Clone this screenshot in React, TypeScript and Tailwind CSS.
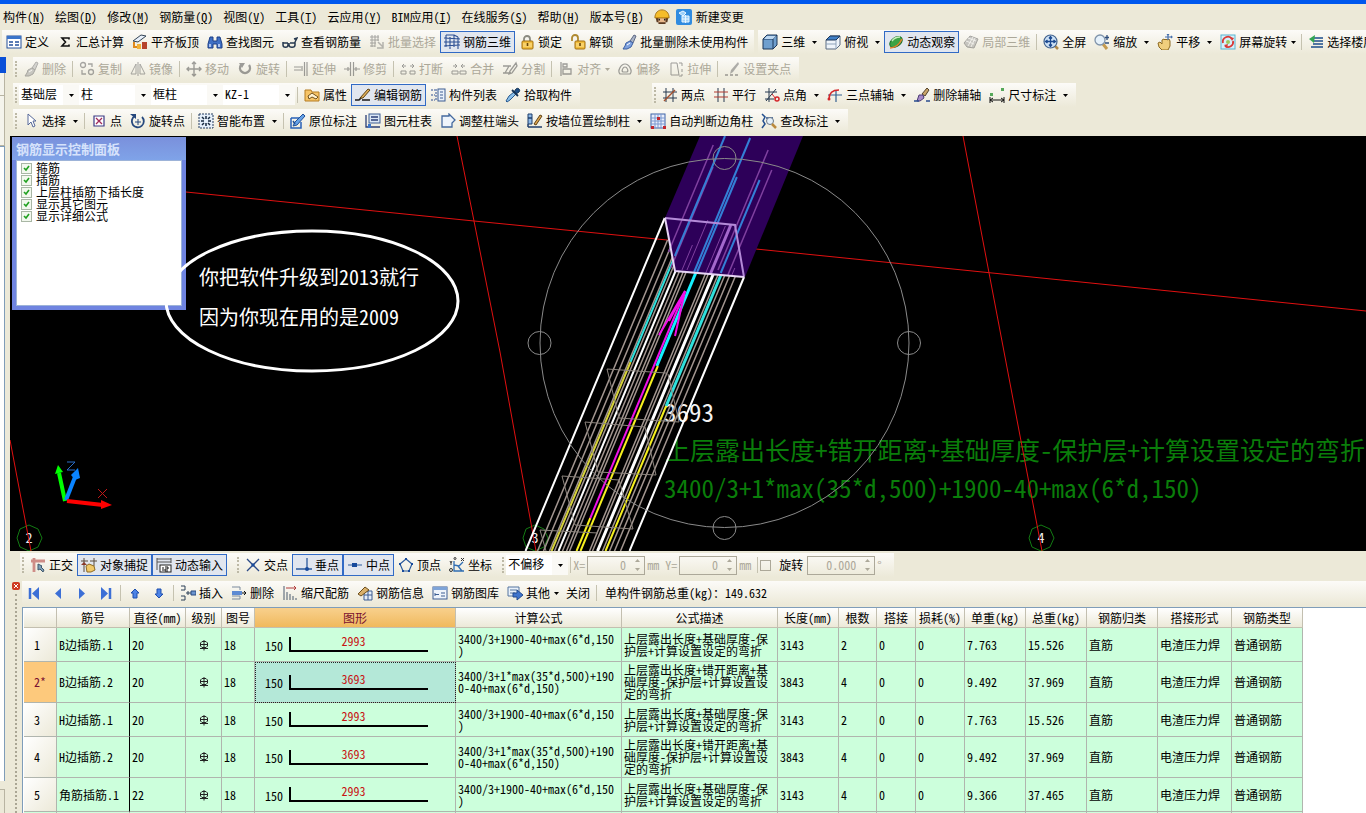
import React from 'react';

const ink = '#2d4f93';

// 16x16 toolbar drawings
const ICONS: Record<string, React.ReactNode> = {
  define: <><rect x="1" y="2" width="14" height="12" fill="#fff" stroke="#24509c" /><path d="M1 2h14v3H1z" fill="#3b74c9" /><path d="M3 8h4M3 11h4M9 8h4M9 11h4" stroke="#24509c" strokeWidth="1.5" /></>,
  sigma: <path d="M12 5.500V4H5l3.500 4L5 12h7v-1.500" fill="none" stroke="#111" strokeWidth="1.600" />,
  slab: <><path d="M1 7 9 1l5 1-8 6z" fill="#e8f0fa" stroke="#345" /><path d="M2 8v5h3" fill="none" stroke="#e08a1e" strokeWidth="2" /><path d="M5 10h4v5H5z" fill="#f2b33a" /><path d="M10 8h5v7h-5z" fill="#b5432b" /></>,
  find: <><path d="M3 3h3v4h4V3h3l2 7v4h-5v-4H6v4H1v-4z" fill="#3f6fc4" stroke="#1c3f86" /><path d="M3 10v3M12 10v3" stroke="#cfe0ff" strokeWidth="1.5" /></>,
  glasses: <><path d="M1 8v3c0 3 5 3 5 0V9M7 11c0 3 6 3 6 0V8M6 10h2M13 8l2-4-3 1M1 9h5M8 9h5" fill="none" stroke="#26384f" strokeWidth="1.500" /></>,
  batch: <><path d="M1 3h9M1 6h9M1 9h6M3 1v12M6 1v12M9 1v6M1 12h5" stroke="#555" /><path d="M9 8l5 5M14 8v6H8" stroke="#777" strokeWidth="1.5" fill="none" /></>,
  cage: <><path d="M2 1v12M6 3v12M10 1v12M14 3v12M0 4l16 1M0 8h16M0 12l16-1M2 1h8l4 2" fill="none" stroke={ink} strokeWidth="1.1" /></>,
  lock: <><path d="M5 8V5a3 3 0 0 1 6 0v3" fill="none" stroke="#8a8a80" strokeWidth="1.8" /><rect x="3" y="7" width="11" height="8" rx="1" fill="#f1bd3c" stroke="#a36f10" /><path d="M4 10h9M4 12h9" stroke="#ffe59a" /><path d="M8.500 9v3" stroke="#6a4606" strokeWidth="1.6" /></>,
  unlock: <><path d="M2 7V4a3 3 0 0 1 6 0v3" fill="none" stroke="#b08a30" strokeWidth="1.8" /><rect x="5" y="7" width="10" height="8" rx="1" fill="#f1bd3c" stroke="#a36f10" /><path d="M6 10h8M6 12h8" stroke="#ffe59a" /><path d="M10 9v3" stroke="#6a4606" strokeWidth="1.6" /></>,
  brush: <><path d="M9 7l4-6 2 1-3 7z" fill="#a9b3c6" stroke="#5c6885" /><path d="M5 9l4-2 3 2-2 4-4 2-4 0 2-3z" fill="#7fa2de" stroke="#3b5fa3" /><path d="M6 11l3-2" stroke="#fff" /></>,
  cube: <><path d="M1 5l4-4h10v10l-4 4H1z" fill="#6f9fce" stroke="#1d3658" /><path d="M1 5h10v10M11 5l4-4" fill="none" stroke="#1d3658" /><path d="M2 5l3-3h9l-3 3z" fill="#bcd7f1" /></>,
  cubeTop: <><path d="M1 6l4-4h10v9l-4 4H1z" fill="#eef4fa" stroke="#5a6b80" /><path d="M1 6l4-4h10l-4 4z" fill="#3f7fc6" stroke="#1d3658" /><path d="M11 6v9M1 10h10" stroke="#8fa3ba" /></>,
  orbit: <><ellipse cx="8" cy="8" rx="7" ry="4.500" transform="rotate(-35 8 8)" fill="#3da344" stroke="#1c6e2a" /><path d="M4 7c2-3 5-4 8-4" stroke="#c8f0bd" fill="none" strokeWidth="1.500" /><path d="M2 14c4 0 9-3 12-9" stroke="#e57f2c" fill="none" strokeWidth="1.500" /></>,
  local3d: <><path d="M1 9l6-7 8 3-4 9-7-1z" fill="#999" stroke="#555" /><path d="M3 7l8 3M5 4l8 3M5 12l5-9M8 13l4-9" stroke="#eee" /></>,
  full: <><path d="M11 11l4 4" stroke="#b28a4a" strokeWidth="2.500" /><circle cx="7.500" cy="7.500" r="6.500" fill="#cfe3f7" stroke="#44648f" strokeWidth="1.200" /><path d="M7.500 3v9M3 7.500h9M6 4.500l1.500-2L9 4.500M6 10.500l1.500 2 1.500-2M4.500 6l-2 1.500 2 1.500M10.500 6l2 1.500-2 1.500" fill="none" stroke="#1c4a91" strokeWidth="1.300" /></>,
  zoom: <><path d="M9 10l4 5" stroke="#c59b4f" strokeWidth="3" /><circle cx="6" cy="6" r="5" fill="#e5f1fb" stroke="#7f93aa" strokeWidth="1.300" /><path d="M13 1v5M11 3.500h4M11 9h4" stroke="#2e4d7c" strokeWidth="1.300" /></>,
  pan: <><path d="M1 9l2-1 2 2V6l2-1 1 1 1-1 1 1 2-1 1 2v5l-2 4H5l-3-3z" fill="#f0ce7d" stroke="#8d6a22" /><path d="M11 0v6M8 3h7M10 1l1-1 1 1M14 2l1 1-1 1" fill="none" stroke="#4770ad" strokeWidth="1.200" /></>,
  screenRot: <><rect x="1" y="1" width="14" height="14" fill="#d6f0fa" stroke="#58b4cf" /><path d="M3 9a5 5 0 0 1 9-4M13 7a5 5 0 0 1-8 5" fill="none" stroke="#d93a36" strokeWidth="1.800" /><path d="M10 3l4 1-2 3zM7 14l-3-3 4-1z" fill="#d93a36" /><circle cx="8" cy="8" r="2" fill="#9cc95d" /></>,
  floors: <><path d="M5 4h10M5 7h10M5 10h10M3 13h12" stroke="#1c4d8c" strokeWidth="1.600" /><path d="M7 1L1 5l5 4z" fill="#31a552" /></>,
  copy: <><circle cx="4" cy="4" r="2.500" fill="none" stroke="#555" strokeWidth="1.300" /><circle cx="12" cy="11" r="2.500" fill="none" stroke="#555" strokeWidth="1.300" /><path d="M9 3h4v3M3 9v4h4" fill="none" stroke="#555" strokeWidth="1.300" /></>,
  mirror: <path d="M6 3v10H1zM10 3v10h5zM8 1v14" fill="none" stroke="#555" />,
  move: <path d="M8 1v14M1 8h14M6 3l2-2 2 2M6 13l2 2 2-2M3 6L1 8l2 2M13 6l2 2-2 2" fill="none" stroke="#444" strokeWidth="1.400" />,
  rotate: <><path d="M4 4a5 5 0 1 0 8 0" fill="none" stroke="#444" strokeWidth="2.400" /><path d="M2 2h6L5 7z" fill="#444" /></>,
  extend: <path d="M1 6h7M1 9h7M11.500 1v14M14 1v14M9 5v5" stroke="#444" fill="none" strokeWidth="1.200" />,
  trim: <path d="M0 8h6M10 8h6M6.500 1v14M9.500 1v14M4 6v4M12 6v4" stroke="#444" fill="none" strokeWidth="1.200" />,
  breakIt: <path d="M1 10h5v3H1zM10 10h5v3h-5zM2 5h4M10 5h4M4 3L2 5l2 2M12 3l2 2-2 2" stroke="#444" fill="none" />,
  join: <path d="M1 10h6v3H1zM9 10h6v3H9zM2 5h4M10 5h4M4 3l2 2-2 2M12 3l-2 2 2 2" stroke="#444" fill="none" />,
  split: <path d="M1 5h8M1 12h8M3 12l4-7M14 2L8 10l-1 3 3-1 5-7z" stroke="#444" fill="none" strokeWidth="1.300" />,
  align: <path d="M3 1v14M5 3h4v3H5zM5 8h8v5H5z" stroke="#444" fill="none" strokeWidth="1.300" />,
  offset: <path d="M8 3c4 0 8 7 5 10H3C0 10 4 3 8 3zM8 6c2 0 4 4 2 5H6C4 10 6 6 8 6z" stroke="#444" fill="none" strokeWidth="1.200" />,
  stretch: <path d="M3 2h6l2 12H3zM11 2h3v3M14 8v3M14 13v2h-3" stroke="#444" fill="none" />,
  grip: <><path d="M14 1L7 9l-1 4 3-2 6-8z" fill="#666" /><path d="M1 14h3M6 14h3M11 14h3" stroke="#444" strokeWidth="1.500" /></>,
  props: <><path d="M1 3h6l1 2h7v9H1z" fill="#f6c467" stroke="#b57d22" /><path d="M4 9l4-3 6 4-2 2-4-2-3 2z" fill="#fff2d0" stroke="#70501a" /></>,
  editRebar: <><path d="M0 13h4l3-3M7 13h8" fill="none" stroke="#1a1a1a" strokeWidth="1.600" /><path d="M5 11l8-9 2 1-7 8z" fill="#e2b15a" stroke="#5d4317" /></>,
  list: <><path d="M1 3h4M1 8h4M1 13h4M6 2v12" stroke={ink} strokeDasharray="2 1" /><rect x="8" y="2" width="7" height="12" fill="#eaf2fb" stroke="#3c5d92" /><path d="M10 5h3M10 8h3M10 11h3" stroke="#3c5d92" /></>,
  pick: <><path d="M4 9l5-4 2 2-6 6-3 2-1-1z" fill="#8bc0ea" stroke="#28598f" /><path d="M9 5l2-3c2-2 5 1 3 3l-3 2z" fill="#1f4f86" stroke="#143355" /><path d="M7 3l6 6" stroke="#143355" strokeWidth="1.800" /></>,
  twoPt: <><path d="M4 1v14M11 1v14M1 5h14M1 11h14" stroke="#26384f" /><path d="M2 14L13 3" stroke="#a3502f" strokeWidth="1.400" /></>,
  parallel: <><path d="M5 1v14M11 1v14" stroke="#26384f" /><path d="M1 5h14M1 10h14" stroke="#b23a30" strokeWidth="1.200" /></>,
  ptAngle: <><path d="M5 1v14M1 5h12M1 12h9" stroke="#26384f" /><path d="M2 14L12 2" stroke="#26384f" /><path d="M8 7l4 5" stroke="#d4262a" /><circle cx="13" cy="12" r="2" fill="none" stroke="#d4262a" strokeWidth="1.500" /></>,
  threePt: <><path d="M1 8h14M9 3v12" stroke="#34608f" strokeWidth="1.200" /><path d="M2 12c0-6 4-9 10-9" fill="none" stroke="#d4262a" strokeWidth="1.500" /><circle cx="2" cy="12" r="1.500" fill="#d4262a" /></>,
  brushAxis: <><path d="M8 7l5-6 2 2-4 6z" fill="#c9a56a" stroke="#52412a" /><path d="M5 8l4 0 1 3-4 3-3 0z" fill="#a68bc8" stroke="#4f3d78" /><path d="M0 14h5M12 14h4" stroke="#2a4c8f" strokeWidth="1.500" /></>,
  dim: <><path d="M1 10v6M15 10v6M1 13h14M4 11l-3 2 3 2M12 11l3 2-3 2" fill="none" stroke="#111" /><path d="M1 6h3v3H1zM12 1h3v3h-3z" fill="#55a85a" /></>,
  cursor: <path d="M5 1v11l3-3 2 5 2-1-2-5h3z" fill="#fff" stroke="#56699a" />,
  point: <><path d="M3 3h10v10H3z" fill="#fff" stroke="#3d3a86" strokeWidth="1.200" /><path d="M5 5l6 6M11 5l-6 6" stroke="#a02a5a" strokeWidth="1.300" /></>,
  rotPt: <><path d="M5 3a6 6 0 1 0 7 1" fill="none" stroke="#26487d" strokeWidth="1.800" /><path d="M0 1h6v5z" fill="#26487d" /><path d="M8 6v6M5 9h6" stroke="#26487d" /></>,
  smart: <><rect x="1" y="1" width="14" height="14" fill="#e5effa" stroke="#223a5e" strokeDasharray="2 1" /><path d="M8 3v3M8 10v3M3 8h3M10 8h3M4 4l2 2M12 4l-2 2M4 12l2-2M12 12l-2-2" stroke="#16283f" strokeWidth="1.500" /></>,
  origin: <><path d="M1 5h8M1 5v10h10V9" fill="none" stroke="#2a62b8" strokeWidth="1.500" /><path d="M3 13l2-4 8-8 2 2-8 9z" fill="#67a2e6" stroke="#1f4f98" /><path d="M3 8l2 3" stroke="#1f4f98" strokeWidth="1.500" /></>,
  colTable: <><rect x="4" y="1" width="11" height="9" fill="#dbe7f5" stroke="#3c5d92" /><path d="M6 4h7M6 7h7M1 2v12h14" fill="none" stroke="#2b3f77" strokeWidth="1.300" /><path d="M3 11h3v4H3z" fill="#3b74c9" /></>,
  colEnd: <path d="M2 3h7V1l6 6-3 3v4H2z" fill="#eef4fb" stroke="#44699f" strokeWidth="1.300" />,
  byWall: <><path d="M1 1h4v4H1zM1 5h4v6H1z" fill="#8fb9e6" stroke="#1f3e6c" /><path d="M1 14h14M1 11v3" stroke="#1f3e6c" strokeWidth="1.500" /><path d="M7 11l6-9 2 1-6 9z" fill="#e0a44d" stroke="#5d4317" /></>,
  autoCol: <><rect x="1" y="1" width="14" height="14" fill="#e8eefb" stroke="#3d63a8" /><path d="M5 1v14M8 1v14M11 1v14M1 5h14M1 8h14M1 11h14" stroke="#7b98cf" /><path d="M1 13h3v3H1zM13 13h3v3h-3zM7 4h3v3H7z" fill="#c2272d" /></>,
  checkDim: <><path d="M1 1l3 3-2 4 2 3-3 4M5 5h7" fill="none" stroke="#24508f" strokeWidth="1.500" /><circle cx="9" cy="8" r="3.500" fill="#e4f0fa" stroke="#6a7685" /><path d="M11 11l4 4" stroke="#bb8a3c" strokeWidth="2.500" /></>,
  ortho: <><path d="M1 4h14M4 1v14" stroke="#cf8d87" strokeWidth="2.800" /><path d="M8 7v6l2-1 3 3 1-2-3-3 1-1z" fill="#7fa0b8" stroke="#3f566b" /></>,
  osnap: <><path d="M3 1v14M13 1v8M0 4h7M9 4h7" stroke="#5a4a3a" /><path d="M5 9l3-2 5 2 1 4-4 2H6z" fill="#f0c869" stroke="#8d6a22" /><path d="M0 8l3-3 3 3z" fill="#8a3a2a" /></>,
  dynIn: <><path d="M1 2h14M1 5h14M1 1v12M15 1v5" stroke="#555" /><rect x="4" y="8" width="11" height="7" fill="#fff" stroke="#222" /><path d="M7 10v4M9 10h3v2H9v2h3" fill="none" stroke="#111" /></>,
  cross: <><path d="M2 2l12 12M14 2L2 14" stroke="#2b4a86" strokeWidth="1.300" /><path d="M6.500 6.500h3v3h-3z" fill="#174a9c" /></>,
  perp: <><path d="M0 12h16M11 1v11" stroke="#2b5a9c" strokeWidth="1.300" /><circle cx="11" cy="12" r="2" fill="#174a9c" /></>,
  mid: <><path d="M1 8h14" stroke="#2b5a9c" /><path d="M5 6h5v4H5z" fill="#174a9c" /></>,
  vertex: <><path d="M8 2l6 5-3 7H5L2 7z" fill="none" stroke="#2b5a9c" strokeWidth="1.200" /><path d="M7 1h2v2H7zM13 6h2v2h-2zM1 6h2v2H1zM4 13h2v2H4zM10 13h2v2h-2z" fill="#174a9c" /></>,
  coord: <><path d="M5 4v10h10M5 8l5 1 4-4M9 9l4 5" fill="none" stroke="#2f6db2" strokeWidth="1.300" /><path d="M1 4l1 2 1-2M2 6v2M12 1l3 3M15 1l-3 3" stroke="#333" fill="none" /><circle cx="2" cy="13" r="1.500" fill="none" stroke="#333" /><circle cx="6" cy="1.500" r="1" fill="none" stroke="#333" /></>,
  first: <><path d="M4 3v11" stroke="#3c6fd6" strokeWidth="2.500" /><path d="M13 2v13L6 8.500z" fill="#3c6fd6" /></>,
  prev: <path d="M11 3v11L5 8.500z" fill="#3c6fd6" />,
  next: <path d="M5 3v11l6-5.500z" fill="#3c6fd6" />,
  last: <><path d="M12 3v11" stroke="#3c6fd6" strokeWidth="2.500" /><path d="M3 2v13l7-6.500z" fill="#3c6fd6" /></>,
  up: <path d="M8 4l4 4h-2v5H6V8H4z" fill="#4d83e6" stroke="#1f4fae" />,
  down: <path d="M8 13l4-4h-2V4H6v5H4z" fill="#4d83e6" stroke="#1f4fae" />,
  insert: <><path d="M1 1h4v4H1M1 11h4v4H1M6 8h5M8 6v4" fill="none" stroke="#2b3f57" /><path d="M11 6h5v4h-5z" fill="#6b94cf" stroke="#2a4a80" /></>,
  del: <><path d="M1 2h8v3M1 11h8v3H1" fill="none" stroke="#7a8a9e" /><path d="M1 6h10v4H1z" fill="#5e8bd3" /><path d="M11 8h4M13 6l2 2-2 2" fill="none" stroke="#111" /></>,
  scale: <><path d="M2 1v14M5 7v8M8 9v6M11 11v4M14 13v2" stroke="#4a5a6e" /><path d="M4 3h10M12 1l2 2-2 2" fill="none" stroke="#b03a3a" /></>,
  info: <><path d="M7 6h8v9H7zM7 10h8M11 6v9" fill="#e5eef8" stroke="#3c5d92" /><path d="M1 9l7-7 4 3-8 6z" fill="#d9b06a" stroke="#6b4d1c" /></>,
  lib: <><rect x="1" y="2" width="14" height="12" fill="#eef4fb" stroke="#3c5d92" /><path d="M1 2h14v3H1z" fill="#7fa4d8" /><path d="M3 8v3M3 9.500h4M9 8h4M9 11h4" stroke="#3c5d92" /></>,
  other: <><path d="M1 2h11v9H1zM3 5h7M3 8h5" fill="#e9f1fa" stroke="#55749f" /><path d="M6 8h4V5l6 5-6 5v-3H6z" fill="#3f74cc" stroke="#21498f" /></>,
};

interface Item {
  icon?: string;
  text?: string;
  label?: string;
  arrow?: 'wide' | 'tight';
  on?: boolean;
  off?: boolean;
  sep?: boolean;
}

const SEP: Item = { sep: true };

const rowMain: Item[] = [
  { icon: 'define', text: '定义' }, { icon: 'sigma', text: '汇总计算' }, { icon: 'slab', text: '平齐板顶' },
  { icon: 'find', text: '查找图元' }, { icon: 'glasses', text: '查看钢筋量' }, { icon: 'batch', text: '批量选择', off: true },
  { icon: 'cage', text: '钢筋三维', on: true }, { icon: 'lock', text: '锁定' }, { icon: 'unlock', text: '解锁' },
  { icon: 'brush', text: '批量删除未使用构件' },
];
const rowView: Item[] = [
  { icon: 'cube', text: '三维', arrow: 'wide' }, { icon: 'cubeTop', text: '俯视', arrow: 'wide' },
  { icon: 'orbit', text: '动态观察', on: true }, { icon: 'local3d', text: '局部三维', off: true }, SEP,
  { icon: 'full', text: '全屏' }, { icon: 'zoom', text: '缩放', arrow: 'wide' }, { icon: 'pan', text: '平移', arrow: 'wide' },
  { icon: 'screenRot', text: '屏幕旋转', arrow: 'tight' }, SEP, { icon: 'floors', text: '选择楼层' },
];
const rowEdit: Item[] = [
  { icon: 'brush', text: '删除' }, SEP, { icon: 'copy', text: '复制' }, { icon: 'mirror', text: '镜像' }, SEP,
  { icon: 'move', text: '移动' }, { icon: 'rotate', text: '旋转' }, SEP, { icon: 'extend', text: '延伸' },
  { icon: 'trim', text: '修剪' }, SEP, { icon: 'breakIt', text: '打断' }, { icon: 'join', text: '合并' },
  { icon: 'split', text: '分割' }, SEP, { icon: 'align', text: '对齐', arrow: 'tight' }, { icon: 'offset', text: '偏移' },
  { icon: 'stretch', text: '拉伸' }, SEP, { icon: 'grip', text: '设置夹点' },
].map((i) => ({ ...i, off: true }));
const rowComp: Item[] = [
  { icon: 'props', text: '属性' }, { icon: 'editRebar', text: '编辑钢筋', on: true },
  { icon: 'list', text: '构件列表' }, { icon: 'pick', text: '拾取构件' },
];
const rowAxis: Item[] = [
  { icon: 'twoPt', text: '两点' }, { icon: 'parallel', text: '平行' }, { icon: 'ptAngle', text: '点角', arrow: 'wide' },
  { icon: 'threePt', text: '三点辅轴', arrow: 'wide' }, { icon: 'brushAxis', text: '删除辅轴' },
  { icon: 'dim', text: '尺寸标注', arrow: 'wide' },
];
const rowDraw: Item[] = [
  { icon: 'cursor', text: '选择', arrow: 'wide' }, SEP, { icon: 'point', text: '点' }, { icon: 'rotPt', text: '旋转点' }, SEP,
  { icon: 'smart', text: '智能布置', arrow: 'wide' }, SEP, { icon: 'origin', text: '原位标注' },
  { icon: 'colTable', text: '图元柱表' }, { icon: 'colEnd', text: '调整柱端头' },
  { icon: 'byWall', text: '按墙位置绘制柱', arrow: 'wide' }, { icon: 'autoCol', text: '自动判断边角柱' },
  { icon: 'checkDim', text: '查改标注', arrow: 'wide' },
];
const rowMode: Item[] = [
  { icon: 'ortho', text: '正交' }, { icon: 'osnap', text: '对象捕捉', on: true }, { icon: 'dynIn', text: '动态输入', on: true },
];
const rowSnap: Item[] = [
  { icon: 'cross', text: '交点' }, { icon: 'perp', text: '垂点', on: true }, { icon: 'mid', text: '中点', on: true },
  { icon: 'vertex', text: '顶点' }, { icon: 'coord', text: '坐标' },
];
const rowRebar: Item[] = [
  { icon: 'first', label: '首行' }, { icon: 'prev', label: '上一行' }, { icon: 'next', label: '下一行' }, { icon: 'last', label: '末行' }, SEP,
  { icon: 'up', label: '上移' }, { icon: 'down', label: '下移' }, SEP,
  { icon: 'insert', text: '插入' }, { icon: 'del', text: '删除' }, { icon: 'scale', text: '缩尺配筋' },
  { icon: 'info', text: '钢筋信息' }, { icon: 'lib', text: '钢筋图库' }, { icon: 'other', text: '其他', arrow: 'tight' },
  { text: '关闭' }, SEP,
];

const MENU: [string, string][] = [
  ['构件', 'N'], ['绘图', 'D'], ['修改', 'M'], ['钢筋量', 'Q'], ['视图', 'V'], ['工具', 'T'], ['云应用', 'Y'],
  ['BIM应用', 'I'], ['在线服务', 'S'], ['帮助', 'H'], ['版本号', 'B'],
];

const Icon = ({ name }: { name: string }) => (
  <svg viewBox="0 0 16 16" className="w-4 h-4 shrink-0">{ICONS[name]}</svg>
);

const Arrow = () => (
  <svg viewBox="0 0 5 3" className="w-[5px] h-[3px] shrink-0"><path d="M0 0h5L2.500 3z" fill="currentColor" /></svg>
);

const Items = ({ items }: { items: Item[] }) => (
  <>
    {items.map((it, i) =>
      it.sep ? (
        <span key={i} className="w-px h-4 mx-0.5 shrink-0 bg-[#c5c2b0]"></span>
      ) : (
        <button
          key={i}
          disabled={it.off}
          aria-label={it.label}
          className={`h-[22px] shrink-0 flex items-center border whitespace-nowrap ${
            it.on ? 'bg-[#e1e6ef] border-[#316ac5]' : 'border-transparent'
          } ${it.off ? 'text-[#aca899]' : ''}`}
        >
          <span className={`flex items-center gap-[3px] px-[3px] ${it.off ? '[&>svg]:opacity-50 [&>svg]:grayscale' : ''}`}>
            {it.icon && <Icon name={it.icon} />}
            {it.text}
          </span>
          {it.arrow && (
            <span className={it.arrow === 'wide' ? 'w-3 pl-1' : 'w-2 pl-px'}><Arrow /></span>
          )}
        </button>
      )
    )}
  </>
);

const Grip = () => (
  <span className="w-0.5 h-4 mx-0.5 shrink-0 border-l-2 border-dotted border-[#bdb9a6]"></span>
);

const Bar = ({ className = '', children }: { className?: string; children: React.ReactNode }) => (
  <div className={`h-6 flex items-center bg-linear-to-b from-[#fcfbf8] to-[#ece9d8] ${className}`}>{children}</div>
);

const Combo = ({ label, value, width }: { label: string; value: string; width: string }) => (
  <span className={`relative shrink-0 ${width}`}>
    <select aria-label={label} className="w-full h-5 pl-0.5 pb-[3px] appearance-none bg-white leading-4 outline-none">
      <option>{value}</option>
    </select>
    <span className="absolute right-0 top-0 w-4 h-5 flex items-center justify-center pointer-events-none bg-[#faf9f5]"><Arrow /></span>
  </span>
);

const Spin = ({ id, value, width }: { id: string; value: string; width: string }) => (
  <span className={`relative shrink-0 h-[19px] flex border border-[#aca899] ${width}`}>
    <input id={id} disabled defaultValue={value} className="w-full min-w-0 pr-[18px] text-right text-[#aca899] bg-transparent" />
    <span className="absolute right-1 top-0 h-full flex flex-col justify-around text-[#aca899] pointer-events-none">
      <span className="rotate-180 flex"><Arrow /></span>
      <Arrow />
    </span>
  </span>
);

const PANEL = ['箍筋', '插筋', '上层柱插筋下插长度', '显示其它图元', '显示详细公式'];

const DisplayPanel = () => (
  <div className="absolute left-0.5 top-px w-[174px] h-[173px] flex flex-col px-1 pb-1 bg-[#6f84e0]">
    <div className="-mx-1 px-1 h-[23px] pt-1 bg-linear-to-b from-[#7a90dc] to-[#7fa3e8] text-[13px] leading-4 font-bold text-[#d6e2fb]">钢筋显示控制面板</div>
    <div className="flex-1 bg-white border border-[#9db3d8] pl-1 pt-px">
      {PANEL.map((p) => (
        <label key={p} className="relative flex items-center gap-1 h-3 leading-3">
          <input type="checkbox" defaultChecked className="appearance-none w-[11px] h-[11px] bg-[#f2f8ee] border border-[#a9b7a5]" />
          <svg viewBox="0 0 7 7" className="absolute left-0.5 top-[3px] w-[7px] h-[7px] pointer-events-none"><path d="M1 3l2 2 3-4" fill="none" stroke="#21a121" strokeWidth="1.600" /></svg>
          {p}
        </label>
      ))}
    </div>
  </div>
);

// every bar of the column runs along this slope; x is given at y = 380
const SLOPE = 0.418;
const along = (x: number, y: number) => x + (380 - y) * SLOPE;

interface Rod { x: number; from: number; to: number; color: string; w?: number }

const rod = (x: number, from: number, to: number, color: string, w = 1): Rod => ({ x, from, to, color, w });

const GREY = '#a39690';
const CYAN = '#2fe0dc';
const YELLOW = '#f6f01e';
const MAUVE = '#8040a0';
const BLUE = '#347fd6';

const RODS: Rod[] = [
  ...[609, 615, 621].map((x) => rod(x, 240, 551, GREY, 1.5)),
  ...[626, 634, 638, 641].map((x) => rod(x, 262, 551, GREY, 1.5)),
  ...[661, 664, 669, 674].map((x) => rod(x, 268, 551, GREY, 1.5)),
  ...[681, 686, 692].map((x) => rod(x, 274, 551, GREY, 1.5)),
  rod(623, 258, 362, CYAN, 2), rod(623, 362, 551, '#d6d23a', 2),
  rod(651, 272, 366, '#14f0ff', 3), rod(652, 366, 551, YELLOW, 2), rod(648, 518, 551, YELLOW, 2),
  rod(677, 272, 406, CYAN, 3), rod(677, 406, 551, YELLOW, 2),
  rod(630, 271, 551, '#fff', 2), rod(669, 274, 551, '#fff', 3),
  rod(648, 291, 518, '#f010e8', 2),
];

const EDGES: Rod[] = [rod(597, 218, 551, '#fff', 2), rod(701, 277, 551, '#fff', 2)];

const UPPER: Rod[] = [
  rod(615, 145, 252, MAUVE, 1.5), rod(624, 167, 268, MAUVE, 1.5), rod(672, 150, 270, MAUVE, 1.5),
  rod(684, 170, 275, MAUVE, 1.5), rod(641, 220, 270, MAUVE), rod(636, 245, 270, MAUVE), rod(666, 225, 274, '#a468cc', 3),
  rod(661, 226, 274, MAUVE), rod(688, 268, 276, MAUVE),
  rod(623, 136, 256, BLUE, 2), rod(649, 138, 272, BLUE, 2), rod(652, 177, 272, BLUE, 2), rod(676, 180, 273, BLUE, 2),
];

const Rods = ({ rods }: { rods: Rod[] }) => (
  <>
    {rods.map((r, i) => (
      <line key={i} x1={along(r.x, r.from)} y1={r.from} x2={along(r.x, r.to)} y2={r.to} stroke={r.color} strokeWidth={r.w} />
    ))}
  </>
);

const Bubble = ({ x, n }: { x: number; n: string }) => (
  <>
    <path d={`M${x - 12} 538l3-9 9-4 9 4 4 9-4 9-9 4-9-4z`} fill="none" stroke="#137a13" />
    <text x={x} y="543" textAnchor="middle" fontSize="14" fill="#eee">{n}</text>
  </>
);

const Scene = () => (
  <div className="relative h-[415px] overflow-hidden bg-black">
    <svg className="absolute inset-0 w-full h-full">
      <g transform="translate(-10 -136)">
        <Bubble x={29} n="2" />
        <Bubble x={535} n="3" />
        <Bubble x={1041} n="4" />
        <g fontSize="25">
          <text x="664" y="422" fill="#f2f2f2">3693</text>
          <text x="665" y="460" fill="#0a7d0a">上层露出长度+错开距离+基础厚度-保护层+计算设置设定的弯折</text>
          <text x="664" y="498" fill="#0a7d0a">3400/3+1*max(35*d,500)+1900-40+max(6*d,150)</text>
        </g>
        <path d="M186 192L474 221 667 240 756 249 1366 311M457 136l17 85 26 131 36 199M963 136l54 284 25 131M10 440l21 111" fill="none" stroke="#e01010" />
        <Rods rods={RODS} />
        <path d="M700 136h103l-58 141-70-6-10-53z" fill="#2d0059" />
        <Rods rods={EDGES} />
        <Rods rods={UPPER} />
        <path d="M665 218l70 7 9 52" fill="none" stroke="#b48ad8" strokeWidth="2" />
        <path d="M665 218l10 53 69 6" fill="none" stroke="#e6d4f4" strokeWidth="2" />
        <path d="M685 291l-26 44M685 291l-10 45M685 291l-16 30" stroke="#f010e8" strokeWidth="2" />
        <g fill="none" stroke="#8d857e">
          <path d="M607 369l59 4M607 369l12 49 60 4-11-48M585 422l60 5 11 48-58-3zM562 476l57 4 14 49-58-4zM540 530l58 3M540 530l6 21" />
        </g>
        <g fill="none" stroke="#8a8a8a">
          <circle cx="724.500" cy="343" r="184.500" />
          <circle cx="724.500" cy="158" r="11.500" />
          <circle cx="724.500" cy="528" r="11.500" />
          <circle cx="539.500" cy="343" r="11.500" />
          <circle cx="909" cy="343" r="11.500" />
        </g>
        <path d="M65 501l-6-28" stroke="#0f0" strokeWidth="4" />
        <path d="M58 465l-3 9 8-2z" fill="#0f0" />
        <path d="M66 500l9-23" stroke="#0a84ff" strokeWidth="4" />
        <path d="M78 468l-7 7 4 5 5-2z" fill="#0a84ff" />
        <path d="M67 501l36 4" stroke="#f00" strokeWidth="4" />
        <path d="M101 500l11 5-11 4z" fill="#f00" />
        <path d="M67 462h8l-8 8h8" fill="none" stroke="#2a6ec8" />
        <path d="M98 489l9 9M107 489l-9 9" stroke="#c01818" />
      </g>
    </svg>
    <DisplayPanel />
    <svg className="absolute inset-0 w-full h-full pointer-events-none">
      <ellipse cx="302" cy="165" rx="146" ry="70" fill="none" stroke="#fff" strokeWidth="3" />
    </svg>
    <div className="absolute left-[189px] top-[121px] text-xl leading-10 font-light text-white whitespace-nowrap">
      <p>你把软件升级到2013就行</p>
      <p>因为你现在用的是2009</p>
    </div>
  </div>
);

const COLS: [string, string][] = [
  ['', 'w-[33px]'], ['筋号', 'w-[73px]'], ['直径(mm)', 'w-[56px]'], ['级别', 'w-[36px]'], ['图号', 'w-[33px]'],
  ['图形', 'w-[201px]'], ['计算公式', 'w-[166px]'], ['公式描述', 'w-[156px]'], ['长度(mm)', 'w-[61px]'], ['根数', 'w-[38px]'],
  ['搭接', 'w-[39px]'], ['损耗(%)', 'w-[49px]'], ['单重(kg)', 'w-[61px]'], ['总重(kg)', 'w-[61px]'], ['钢筋归类', 'w-[71px]'],
  ['搭接形式', 'w-[74px]'], ['钢筋类型', 'w-[71px]'],
];

const SHORT = { bar: '2993', formula: '3400/3+1900-40+max(6*d,150)', desc: '上层露出长度+基础厚度-保护层+计算设置设定的弯折', len: '3143' };
const LONG = { bar: '3693', formula: '3400/3+1*max(35*d,500)+1900-40+max(6*d,150)', desc: '上层露出长度+错开距离+基础厚度-保护层+计算设置设定的弯折', len: '3843' };

const ROWS = [
  { no: '1', name: 'B边插筋.1', dia: '20', ...SHORT, count: '2', unit: '7.763', total: '15.526' },
  { no: '2*', name: 'B边插筋.2', dia: '20', ...LONG, count: '4', unit: '9.492', total: '37.969' },
  { no: '3', name: 'H边插筋.1', dia: '20', ...SHORT, count: '2', unit: '7.763', total: '15.526' },
  { no: '4', name: 'H边插筋.2', dia: '20', ...LONG, count: '4', unit: '9.492', total: '37.969' },
  { no: '5', name: '角筋插筋.1', dia: '22', ...SHORT, count: '4', unit: '9.366', total: '37.465' },
];

const RebarTable = () => (
  <table className="table-fixed w-[1279px] border-separate border-spacing-0 leading-3 [&_td]:border-r [&_td]:border-b [&_td]:border-[#b0b5ae] [&_td]:px-0.5 [&_td]:py-0">
    <colgroup>{COLS.map(([, w], i) => <col key={i} className={w} />)}</colgroup>
    <thead>
      <tr className="h-5">
        {COLS.map(([h], i) => (
          <th
            key={i}
            className={`p-0 font-normal whitespace-nowrap border-r border-b border-[#c3bfb0] ${
              h === '图形' ? 'bg-linear-to-b from-[#f8d08c] to-[#f0b95c] text-[#7a1030]' : 'bg-linear-to-b from-white to-[#ece9d8]'
            }`}
          >
            {h}
          </th>
        ))}
      </tr>
    </thead>
    <tbody>
      {ROWS.map((r) => {
        const cur = r.no === '2*';
        return (
          <tr key={r.no} className={`bg-[#ccffdc] ${r.bar === '3693' ? 'h-[41px]' : 'h-[34px]'}`}>
            <td className={cur ? 'bg-[#fdc97c] text-[#7a1030]' : 'bg-linear-to-br from-white to-[#ece9d8]'}>
              <span className="pl-2">{r.no}</span>
            </td>
            <td className="border-r-black! whitespace-nowrap">{r.name}</td>
            <td>{r.dia}</td>
            <td>
              <svg viewBox="0 0 10 12" aria-label="HRB335" className="w-[10px] h-3 mx-auto"><path d="M5 1v10.500M3 2.500h4l1.500 1.500v3L7 8.500H3L1.500 7V4zM1 5.500h8M1 9.500h8" fill="none" stroke="#222" /></svg>
            </td>
            <td>18</td>
            <td className={cur ? 'bg-[#b4e8d8] outline outline-dotted outline-[#222] -outline-offset-1' : ''}>
              <div className="flex items-center gap-1 pl-2">
                <span className="w-5 pt-0.5">150</span>
                <span className="w-[139px] h-[15px] pr-3 border-l-2 border-b-2 border-black text-center leading-[7px] text-[#c81414]">{r.bar}</span>
              </div>
            </td>
            <td className="[line-break:anywhere]">{r.formula}</td>
            <td className="[line-break:anywhere]">{r.desc}</td>
            <td>{r.len}</td>
            <td>{r.count}</td>
            <td>0</td>
            <td>0</td>
            <td>{r.unit}</td>
            <td>{r.total}</td>
            <td>直筋</td>
            <td>电渣压力焊</td>
            <td>普通钢筋</td>
          </tr>
        );
      })}
      <tr className="h-5 bg-[#ccffdc]">{COLS.map((_, i) => <td key={i}></td>)}</tr>
    </tbody>
  </table>
);

export default function App() {
  return (
    <div className="h-screen overflow-hidden flex flex-col bg-[#ece9d8] text-black text-xs font-['Noto_Sans_Mono_CJK_SC','Noto_Sans_CJK_SC',sans-serif]">
      <div className="h-1 shrink-0 bg-[#0058ee]"></div>
      <nav className="h-[26px] shrink-0 flex items-center gap-2.5 pl-[3px] whitespace-nowrap">
        {MENU.map(([name, key]) => (
          <button key={name}>{name}(<u>{key}</u>)</button>
        ))}
        <button className="flex items-center gap-1">
          <svg viewBox="0 0 18 18" className="w-4 h-4">
            <path d="M4 9h10v5l-3 3H7l-3-3z" fill="#e8b98c" />
            <path d="M2 10h3v5H3zM13 10h3l-1 5h-2zM5 15h8v2H5z" fill="#5a3a22" />
            <path d="M1 10c0-6 4-9 8-9s8 3 8 9z" fill="#f5bd2a" stroke="#a06c0c" />
            <path d="M6 11v2M12 11v2" stroke="#222" strokeWidth="1.500" />
          </svg>
          <svg viewBox="0 0 16 16" className="w-4 h-4 ml-0.5">
            <rect width="16" height="16" rx="2" fill="#2f8be0" />
            <path d="M3 4l4-2 3 2-3 3zM6 7h7v6H6zM9.500 6v8M6 10h7" fill="#9cd0fa" stroke="#e9f6ff" />
          </svg>
          <span>新建变更</span>
        </button>
      </nav>
      <div className="shrink-0 flex gap-1 pl-0.5 mb-[3px]">
        <Bar className="pr-0.5"><Items items={rowMain} /></Bar>
        <Bar className="flex-1 min-w-0 overflow-hidden"><Items items={rowView} /></Bar>
      </div>
      <div className="flex-1 min-h-0 flex">
        <aside className="w-2.5 shrink-0 flex flex-col">
          <div className="w-1.5 h-4 bg-[#0a50d8]"></div>
          <div className="w-[5px] h-[23px] border-r border-b border-[#b8b4a2] bg-[#f5f4ec]"></div>
          <div className="w-[5px] h-[50px] border-r border-b border-[#b8b4a2] bg-[#f5f4ec]"></div>
          <div className="w-[5px] flex-1 mb-2 border-r border-t border-[#7f9db9] bg-white"></div>
          <div className="w-[5px] h-6 border-t border-r border-[#b8b4a2]"></div>
        </aside>
        <main className="flex-1 min-w-0 flex flex-col">
          <div className="shrink-0 flex flex-col items-start gap-0.5 pl-[3px] pb-[3px]">
            <Bar className="pr-1"><Grip /><Items items={rowEdit} /></Bar>
            <div className="flex gap-[72px]">
              <Bar className="pr-1">
                <Grip />
                <Combo label="楼层" value="基础层" width="w-[60px]" />
                <Combo label="构件类型" value="柱" width="w-[72px]" />
                <Combo label="构件小类" value="框柱" width="w-[72px]" />
                <Combo label="构件名称" value="KZ-1" width="w-[72px]" />
                <Items items={[SEP, ...rowComp]} />
              </Bar>
              <Bar className="pr-1"><Grip /><Items items={rowAxis} /></Bar>
            </div>
            <Bar className="pr-1"><Grip /><Items items={rowDraw} /></Bar>
          </div>
          <div className="shrink-0"><Scene /></div>
          <div className="shrink-0 flex pl-2.5 pt-0.5 mb-1">
            <Bar className="pr-1"><Grip /><Items items={rowMode} /></Bar>
            <Bar className="pl-1"><Grip /><Items items={rowSnap} /></Bar>
            <Bar className="pl-1 pr-3">
              <Grip />
              <Combo label="偏移方式" value="不偏移" width="w-[62px]" />
              <Items items={[SEP]} />
              <label htmlFor="offX" className="w-[14px] text-[#aca899]">X=</label>
              <Spin id="offX" value="0" width="w-[58px]" />
              <span className="w-5 pl-0.5 text-[#aca899]">mm</span>
              <label htmlFor="offY" className="w-[14px] text-[#aca899]">Y=</label>
              <Spin id="offY" value="0" width="w-[58px]" />
              <span className="w-[18px] pl-0.5 text-[#aca899]">mm</span>
              <Items items={[SEP]} />
              <label className="flex items-center gap-2 mr-1">
                <input type="checkbox" className="appearance-none w-[11px] h-[11px] border border-[#aca899]" />
                旋转
              </label>
              <Spin id="angle" value="0.000" width="w-[68px]" />
              <label htmlFor="angle" className="pl-0.5 text-[#aca899]">°</label>
            </Bar>
          </div>
          <div className="flex-1 min-h-0 flex">
            <div className="w-3 shrink-0 flex flex-col items-center gap-1">
              <button aria-label="关闭面板" className="w-2 h-2 mt-px flex items-center justify-center rounded-xs bg-[#cf3a22] text-white">
                <svg viewBox="0 0 6 6" className="w-1.5 h-1.5"><path d="M1 1l4 4M5 1L1 5" stroke="currentColor" /></svg>
              </button>
              <span className="flex-1 border-l-2 border-dotted border-[#aaa694]"></span>
            </div>
            <section className="flex-1 min-w-0 flex flex-col">
              <Bar className="shrink-0">
                <Items items={rowRebar} />
                <span className="pl-1.5 whitespace-nowrap">单构件钢筋总重(kg)：149.632</span>
              </Bar>
              <div className="flex-1 min-h-0 mt-0.5 pl-px overflow-hidden bg-white border-t border-l border-[#7f9db9]">
                <RebarTable />
              </div>
            </section>
          </div>
        </main>
      </div>
    </div>
  );
}
